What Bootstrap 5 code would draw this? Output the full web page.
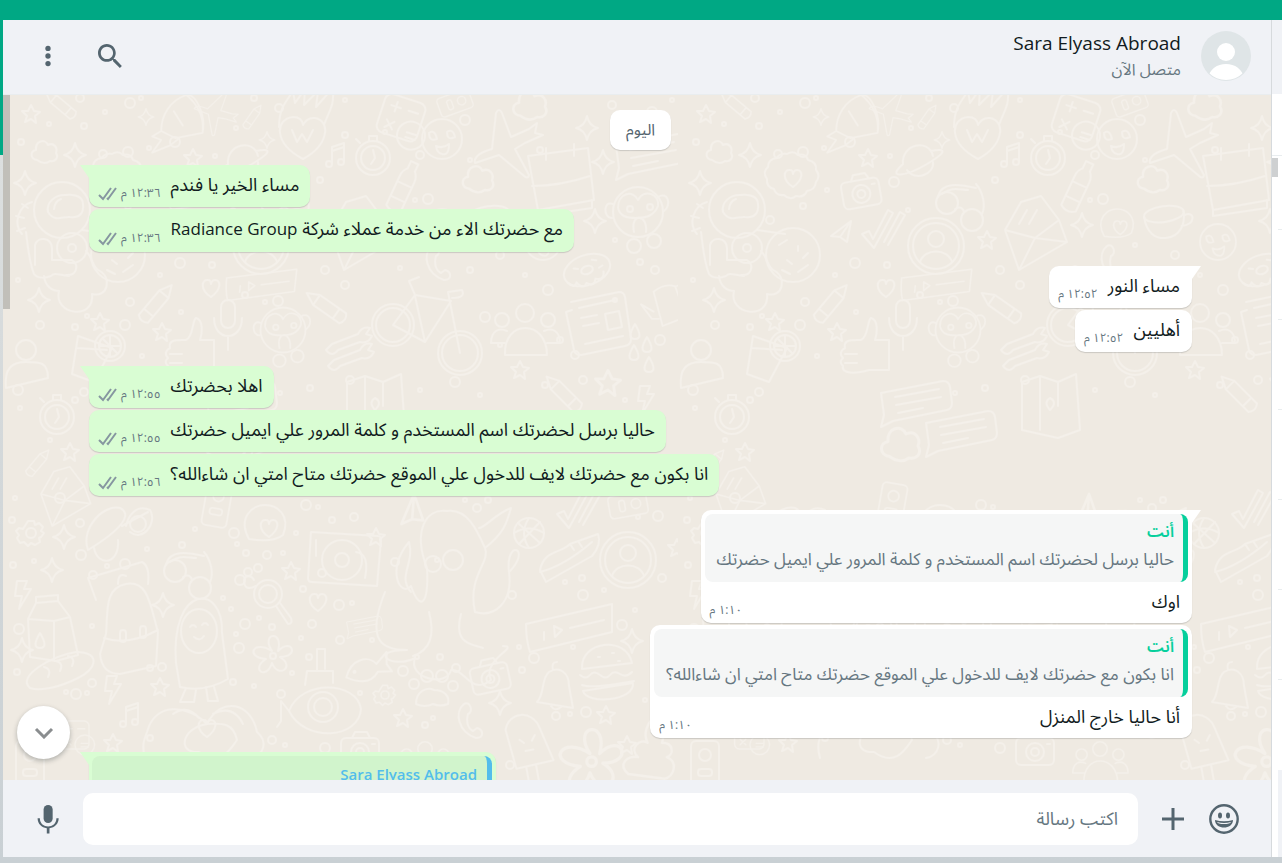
<!DOCTYPE html>
<html lang="ar" dir="rtl">
<head>
<meta charset="utf-8">
<meta name="viewport" content="width=device-width, initial-scale=1">
<title>Sara Elyass Abroad</title>
<link rel="stylesheet" href="https://cdn.jsdelivr.net/npm/bootstrap@5.3.0/dist/css/bootstrap.min.css">
<style>
:root{--icon:#54656f;--muted:#667781;--ink:#111b21;--panel:#f0f2f6;--line:#e9edef}
body{font-family:"Open Sans","Noto Sans Arabic",sans-serif;font-size:18px;line-height:30px;color:var(--ink);
  background:linear-gradient(#00a884 155px,#dcdfdf 155px,#d2d7d9 500px,#c9d0d4 100%);overflow:hidden}
.shell{height:100vh;padding:20px 0 6px 3px}
.side{width:10px;background:#fff}
.side-head{height:74px;background:var(--panel)}
.side-search{height:62px;border-bottom:1px solid var(--line)}
.side-list{position:relative;padding-left:6px}
.side-thumb{position:absolute;top:2px;left:0;width:6px;height:19px;background:#ced0d1}
.side-row{flex:0 0 90px;border-bottom:1px solid var(--line)}
.side-row:first-of-type{flex-basis:74px}
.side-row.active{background:var(--panel);border:0;flex:1 1 0}
.chat{min-width:0;border-right:1px solid #d6dadd}
.chat-head{height:75px;background:var(--panel);padding:0 20px 2px 29px;gap:30px;border-bottom:1px solid var(--line)}
.who{margin-right:-10px}
.who-name{font-size:19px;line-height:26px;font-weight:400;direction:ltr;text-align:right}
.who-state{font-size:16px;line-height:26px;color:var(--muted)}
.tool{border:0;background:none;padding:0;width:32px;height:32px;color:var(--icon);display:flex;align-items:center;justify-content:center;flex-shrink:0}
.stream{position:relative;background:#efeae2;overflow:hidden;min-height:0}
.wall{position:absolute;inset:0;width:100%;height:100%}
.thumb{position:absolute;left:0;top:0;width:7px;height:214px;background:rgba(11,20,26,.2)}
.log{position:relative;padding:15px 79px 0 86px}
.day{font-size:16px;line-height:24px;padding:7px 16px 9px;color:var(--icon);margin-bottom:15px}
.day,.bub{background:#fff;border-radius:10px;box-shadow:0 1px 1px rgba(11,20,26,.16)}
.turn{gap:2px;margin-bottom:14px}
.bub{position:relative}
.out .bub{background:#d9fdd3}
.tail:before{content:"";position:absolute;top:0;width:18px;height:13px;background:inherit}
.in .tail:before{right:-9px;clip-path:polygon(0 0,100% 0,9px 100%,0 100%)}
.out .tail:before{left:-9px;clip-path:polygon(0 0,100% 0,100% 100%,9px 100%)}
.in .tail{border-top-right-radius:0}.out .tail{border-top-left-radius:0}
.says{display:flex;justify-content:space-between;gap:10px;padding:4px 12px 8px 9px}
.out .says{padding-right:11px}
.stamp{font-size:12px;line-height:20px;color:var(--muted);display:flex;gap:4px;align-self:flex-end;margin-bottom:-4px;white-space:nowrap}
.stamp svg{margin-top:4px}
.latin{font-size:17px}
.quoted{position:relative;background:#f5f6f6;border-radius:8px;margin:4px 4px 0;padding:3px 9px 9px 12px;border-right:5px solid #06cf9c;overflow:hidden;font-size:17px;line-height:28px;color:var(--muted)}
.out .quoted{background:#d1f4cc;border-color:#53bdeb;padding:4px 10px 36px 16px;margin-left:3px}
.quoted strong{display:block;font-weight:600;font-size:16px;color:#06cf9c}
.out .quoted strong{color:#53bdeb;font-size:15px}
.in .reply .says{padding:4px 12px 7px 9px}
.later{width:407px}
.jump{position:absolute;left:14px;bottom:21px;width:53px;height:53px;background:#fff;border:0;border-radius:50%;color:#8a8d8f;box-shadow:0 2px 5px rgba(11,20,26,.28);display:flex;align-items:center;justify-content:center}
.compose{height:77px;background:var(--panel);padding:0 31px 0 29px;gap:19px}
.compose .form-control{height:52px;border:0;border-radius:10px;padding:0 20px 2px;font-size:18px;color:var(--ink)}
.compose .form-control::placeholder{color:var(--muted);opacity:1}
</style>
</head>
<body>
<div class="shell d-flex">
  <aside class="side d-flex flex-column flex-shrink-0">
    <div class="side-head flex-shrink-0"></div>
    <div class="side-search flex-shrink-0"></div>
    <div class="side-list flex-fill d-flex flex-column">
      <div class="side-row"></div><div class="side-row"></div><div class="side-row"></div><div class="side-row"></div><div class="side-row"></div><div class="side-row"></div><div class="side-row border-0"></div><div class="side-row active"></div>
      <span class="side-thumb"></span>
    </div>
  </aside>
  <main class="chat flex-fill d-flex flex-column">
    <header class="chat-head d-flex align-items-center flex-shrink-0">
      <svg width="50" height="50" viewBox="0 0 50 50" aria-hidden="true"><defs><clipPath id="av"><circle cx="25" cy="25" r="24"/></clipPath></defs><circle cx="25" cy="25" r="25" fill="#dfe5e7"/><g fill="#fff" clip-path="url(#av)"><circle cx="25" cy="21" r="9"/><path d="M6 50c2-12 10-17 19-17s17 5 19 17z"/></g></svg>
      <div class="who flex-fill">
        <h1 class="who-name m-0">Sara Elyass Abroad</h1>
        <div class="who-state">متصل الآن</div>
      </div>
      <button class="tool" type="button" aria-label="بحث"><svg width="32" height="32" viewBox="0 0 24 24" fill="currentColor"><path d="M15.9 14.3H15l-.3-.3c1-1.1 1.6-2.7 1.6-4.3 0-3.7-3-6.7-6.7-6.7S3 6 3 9.7s3 6.7 6.7 6.7c1.6 0 3.2-.6 4.3-1.6l.3.3v.8l5.1 5.1 1.5-1.5-5-5.2zm-6.2 0c-2.6 0-4.6-2.1-4.6-4.6s2.1-4.6 4.6-4.6 4.6 2.1 4.6 4.6-2 4.6-4.6 4.6z"/></svg></button>
      <button class="tool" type="button" aria-label="القائمة"><svg width="32" height="32" viewBox="0 0 24 24" fill="currentColor"><circle cx="12" cy="6.300" r="2"/><circle cx="12" cy="12" r="2"/><circle cx="12" cy="17.700" r="2"/></svg></button>
    </header>
    <section class="stream flex-fill">
      <svg class="wall" aria-hidden="true">
        <defs>
          <symbol id="star" overflow="visible"><path d="M0-9 3-3 9-2 4 2 5 9 0 5-6 8-4 2-9-3-3-3z"/></symbol>
          <symbol id="spark" overflow="visible"><path d="M0-12Q2-2 11 0 2 2 0 12-2 2-11 0-2-2 0-12z"/></symbol>
          <symbol id="cloud" overflow="visible"><path d="M-9 9c-7-1-7-9-1-10-1-9 9-12 12-5 6-3 10 3 8 8 3 5-1 9-6 8-4 3-9 2-13-1z"/></symbol>
          <symbol id="heart" overflow="visible"><path d="M0 9C-12 1-9-9-3-8q3 0 3 4 1-4 4-4C10-8 11 1 0 9z"/></symbol>
          <symbol id="gear" overflow="visible"><circle r="5"/><path d="M-3-12h6l1 4 4-2 4 4-2 4 3 2-3 4-2 1 1 4-5 3-4-2-3 3-4-4-4 1-3-5 2-3-3-4 3-3 4 1z"/></symbol>
          <symbol id="astro" overflow="visible"><circle r="28"/><path d="M-14 2C-16-8-6-16 4-15c10-1 17 2 17 9 1 9-3 14-13 13-7-1-15 6-22-5zM-8-1q1-8 7-10M-30-8c-14 4-19 22-10 32M-34-2l-6-4M-38 8l-8-2M-37 18l-8 3M-36 22c2 16 3 30 8 42 4 5 12 4 17 2 3-4 8-1 18 0M-27 55V35c3-9 16-8 17 3v12h20c8 6 4 16-6 15M-18 66c1 10 8 15 15 15-6 24 36 30 33 3 16 4 20-16 8-23-7-2-7-13-14-20M20 20l28 4"/><circle cx="10" cy="38" r="15"/><circle cx="10" cy="38" r="4"/><circle cx="56" cy="45" r="27"/><path d="M42 35l8-5M61 36v5M50 50l5 4M66 48l5-5M45 60l8 4M61 62l10-7"/></symbol>
          <symbol id="badge" overflow="visible"><path d="M-6-24q6-4 11 1 8-2 10 5 9 2 8 10 5 6 0 12-1 8-9 9-3 7-11 5-6 5-12-1-8 1-10-6-8-2-7-10-5-7 1-12 0-8 9-9 3-5 10-4z"/><use href="#heart"/></symbol>
          <symbol id="camera" overflow="visible"><rect x="-19" y="-12" width="38" height="27" rx="5"/><circle cy="2" r="9"/><circle cy="2" r="4"/><path d="M-8-12l3-6H7l3 6M12-6h3"/></symbol>
          <symbol id="planet" overflow="visible"><path d="M-14 4C-16-16 12-22 16-4M-10 10C-2 22 18 14 16 2M-14 4C-32 20-10 16 10 4S30-12 14-9"/></symbol>
          <symbol id="rocket" overflow="visible"><path d="M-12 10C-12-8-2-24 16-30 28-20 36-6 34 12L4 18zM-12 10l-10 6 10 4-10 14 20-8 10-8M2-12l10 16M16-30C26-32 38-8 34 12"/></symbol>
          <symbol id="flame" overflow="visible"><path d="M0 26C-30 10-28-14-10-16Q-1-16 0-8 4-16 12-15C28-12 26 12 0 26zM-24-6c0-20 8-26 14-36l2 12 10-14-1 16 14-14-2 16 16-18c4 14-4 24-8 36"/><path d="M-11-3l5 12 5-8 5 8 6-12"/></symbol>
          <symbol id="specs" overflow="visible"><circle cx="-13" cy="-5" r="11"/><circle cx="12" cy="12" r="11"/><path d="M-5 1Q2-3 4 4M-22-12c4-14 20-12 38-8M22 6c4-8 1-22-6-30M-18-14c10-8 18-4 26-4"/></symbol>
          <symbol id="mail" overflow="visible"><path d="M-30 0-14-28 6-34 24-10 32 12-16 40zM-30 0l30 8 24-18M0 8l32 4M0 8l-16 32M-16-6l8-14M-6-6l8-14"/></symbol>
          <symbol id="face" overflow="visible"><circle r="28"/><circle r="23"/><circle cy="-7" r="8"/><path d="M-16 16C-12 2 12 2 16 16"/></symbol>
          <symbol id="ticks" overflow="visible"><path d="M-18 4l7-3 4 8L8-20l5 3L-6 18zM4 12 20-18l5 3L8 15"/></symbol>
          <symbol id="plane" overflow="visible"><path d="M-10 4 10-11 6 10-1 5zM-1 5 10-11"/></symbol>
          <symbol id="note" overflow="visible"><path d="M-6 8V-8l12-4V6M-6-4l12-4"/><circle cx="-9" cy="9" r="3"/><circle cx="3" cy="7" r="3"/></symbol>
          <symbol id="clock" overflow="visible"><circle r="17"/><circle r="12"/><path d="M0-8l2 8-4 6M-4-17v-5h8v5M-13-15l-4-4"/></symbol>
          <symbol id="bottle" overflow="visible"><path d="M-8-12q0-6 4-10v-8h8v8q4 4 4 10v32q-8 6-16 0zM-8-6H8M-8 10H8"/></symbol>
          <symbol id="smile" overflow="visible"><circle r="20"/><path d="M-13-6q6-4 8 6-8 3-8-6zM5-7q6-4 8 5-8 4-8-5zM-6 7q7 3 13-2 0 12-7 10-5-1-6-8z"/></symbol>
          <symbol id="calc" overflow="visible"><rect x="-22" y="-20" width="42" height="40" rx="7"/><path d="M-14-9h10M-9-14v10M4-9h10M-14 6l8 8M-6 6l-8 8"/><circle cx="14" cy="14" r="14"/><path d="M9 12h10M9 17h10"/></symbol>
          <symbol id="jet" overflow="visible"><path d="M-30 18c-2-8 10-12 17-14l4-36q3-6 6 0L6-8 24-16l8-6-2 10 8 2-18 8-10 6 14 26q-1 5-6 0L-6 10z"/></symbol>
          <symbol id="cal" overflow="visible"><path d="M-32-24 28-32 34 20-22 30z"/><path d="M-14-32v12M14-36v12M-28 6q28 0 58-10M-22 30v6l54-8v-8"/></symbol>
          <symbol id="cup" overflow="visible"><ellipse cy="-8" rx="20" ry="8"/><path d="M-20-8c0 16 8 24 20 24S20 6 20-8M20-4c12-4 10 12-4 10"/></symbol>
          <symbol id="donut" overflow="visible"><ellipse rx="24" ry="15"/><ellipse rx="6" ry="4"/><path d="M-22 6q4 8 8 2 4 10 9 4 6 7 10-1 8 5 10-4M-12-6l4 2M8-8l4 2M12 2l4-1"/></symbol>
          <symbol id="phone" overflow="visible"><path d="M-6-16c-10 8-6 28 12 34 8 0 8-8 1-10l-4 3C-3 8-4 0-2-6c6-2 2-14-4-10z"/></symbol>
          <symbol id="chatbox" overflow="visible"><path d="M-34-12 28-24q6 0 7 6l2 16q0 6-5 7L-22 16l-12 6 3-12zM-20-8l44-8M-19 0l45-8M-17 8 8 3"/></symbol>
          <symbol id="monkey" overflow="visible"><circle r="25"/><path d="M-20-4c0-16 16-18 20-8 6-12 22-6 20 6-4 10-12 12-22 12C-12 6-18 4-20-4zM-25-8c-10-4-10 14-1 14M20-15c10-6 14 8 6 14M-4 20c-4-20 14-18 12 0"/><circle cx="-8" cy="-3" r="3"/><circle cx="12" cy="-5" r="3"/><circle cx="-4" cy="34" r="7"/><circle cx="16" cy="29" r="7"/></symbol>
          <symbol id="pencil" overflow="visible"><path d="M-6-14 0-26l6 12v32q-6 5-12 0zM-6-14H6M-6 10H6"/></symbol>
          <symbol id="mic2" overflow="visible"><rect x="-7" y="-20" width="14" height="28" rx="7"/><path d="M-14-2c0 24 28 24 28 0M0 16v14"/></symbol>
          <symbol id="thumb2" overflow="visible"><path d="M-4-10C4-14 2-30 6-32c8 2 6 16 4 22h14v30H4c-14 4-28 4-26-4-4-4-2-6 0-8-4-4-2-8 2-10-2-8 6-8 12-8zM-20 4h12M-20 13h12"/></symbol>
          <symbol id="drink" overflow="visible"><path d="M-20-20 14-8-4 26-26 18zM-21-8l30 2"/><circle cx="12" cy="-10" r="15"/><circle cx="12" cy="-10" r="11"/><path d="M2-10h20M12-20v20M5-17l14 14"/></symbol>
          <symbol id="person" overflow="visible"><circle cy="-18" r="10"/><path d="M-20 20c-2-20 6-26 20-26S22-6 22 10z"/></symbol>
          <symbol id="bike" overflow="visible"><circle cx="-35" cy="5" r="21"/><circle cx="-35" cy="5" r="17"/><circle cx="32" cy="33" r="22"/><circle cx="32" cy="33" r="18"/><path d="M-35 5l22-30 36 6L-3 22zM32 33 20-28l14-2q4 8-10 8M-13-25l-6-14 10-4M-3 22l-10-46"/></symbol>
          <symbol id="people" overflow="visible"><circle cy="-20" r="9"/><circle cx="-23" cy="-13" r="7"/><circle cx="23" cy="-13" r="7"/><path d="M-20 22c-2-36 42-36 42 0zM-20 10h-14c0-12 8-16 16-12M22 10h13c0-12-8-16-16-12"/></symbol>
          <symbol id="wrench" overflow="visible"><path d="M-22 8l6-6 26-10q4-8 12-6l-4 6 6 2q-4 8-12 6L-10 8q-6 8-12 0z"/></symbol>
          <symbol id="paper" overflow="visible"><path d="M-26-20 22-30q5 0 6 5l6 42q0 6-6 7l-44 9q-6 0-7-5l-8-38 6-2M-18-14l36-8M-16-4l16-3M-14 4l16-3M-12 22l38-8M8-8l14-3 3 16-14 3z"/></symbol>
          <symbol id="kettle" overflow="visible"><path d="M-16-18q12-10 24-6l12 34-26 10zM-16 4-30-4l12 16 8 0M8-24c16-6 18 10 10 22"/></symbol>
          <symbol id="drop" overflow="visible"><path d="M0-8q9 15 0 15-9 0 0-15z"/></symbol>
          <symbol id="bolt" overflow="visible"><path d="M-5-14h10l-3 8h7L-3 14 0 1h-7z"/></symbol>
          <symbol id="map" overflow="visible"><path d="M-28-18-10-24 8-18 26-26 30 30 8 38-28 30zM-10-24V30M8-18v24"/><path d="M0 10q-7-8 0-12 8 4 0 12z"/></symbol>
          <symbol id="ufo" overflow="visible"><path d="M-22 22C-30 0-6-24 10-20 22-14 14 0-22 22zM-16 20c4 20 26 16 24-8M12-2l26-14M20 4c12 10 28-8 20-22-14-6-22 6-24 16"/><circle cx="28" cy="-4" r="8"/></symbol>
          <symbol id="cell" overflow="visible"><rect x="-14" y="-24" width="28" height="48" rx="5"/><circle cy="-10" r="6"/><rect x="-7" y="4" width="14" height="7" rx="3"/></symbol>
          <symbol id="stick" overflow="visible"><path d="M-16 14C-28-8-12-20 0-20s26 10 18 30Q8 18-16 14z"/><use href="#heart" x="4" y="3"/></symbol>
          <symbol id="deck" overflow="visible"><path d="M-31-28 36-24q3 0 3 4l-4 46-65-4q-4 0-4-4z"/><circle cy="0" r="20"/><circle r="7"/><path d="M14-8q14 2 9 26M-26-20v16"/></symbol>
          <symbol id="octo" overflow="visible"><path d="M-28 0C-42-36-30-60-8-57 12-60 22-38 30-20 36-6 12 8 20 44 40 50 58 34 54 4M-28 0C-26 40-36 42-44 18-54 30-70 2-46-26-40-4-58 8-44 24M-70 24c-20 50-2 58 22 58M-48 82c-40 0-16 20 8 8-8 20 32 30 36 12 14-2 20 26 40 10-10-20 30-34 12-34M30-20c20-16 22-26 26-40-16 6-26 20-32 20M54 4C50-30 78-20 54 4M-26 44c8 30-4 40-16 44M6 46c-8 30 10 30 22 34"/><circle cx="-2" cy="-8" r="10"/><circle cx="-22" cy="-4" r="8"/></symbol>
          <symbol id="ball" overflow="visible"><circle r="15"/><path d="M-11-10 11 10M11-11-10 11M0-15q-10 15 0 30M-15 0q15-9 30 0"/></symbol>
          <symbol id="shoe" overflow="visible"><path d="M-30 14C-26-6-10-2 0-12L28-22q4 10-6 22L-24 26zM-30 16q24-6 52-30M0-12l4 6M8-15l4 6"/></symbol>
          <symbol id="bag" overflow="visible"><path d="M-24 10c2-22-2-46 20-50 22-4 24 20 32 48l-2 34-36 8q-18 0-20-20zM-26 14q24 8 54-8M-34-24-42-46 12-62q8 4 6 22M-12-40q0-12 8-8"/><rect x="-10" y="6" width="6" height="12" rx="3"/><rect x="10" y="2" width="6" height="12" rx="3"/></symbol>
          <symbol id="milk" overflow="visible"><path d="M-24-8l8-16 22-2 12 16 8 38-22 6-26-4zM-24-8l26 2 16-4M2-6v40M-16-24v-6l22-2v6"/><use href="#drop" x="-12" y="14"/></symbol>
          <symbol id="glass" overflow="visible"><circle r="14"/><circle r="9"/><path d="M8 12l12 18q5 0 3-6L12 9M-12-8q-12 6-12-6c2-6 8-4 10 0"/><circle cx="-20" cy="-22" r="4"/><circle cx="-10" cy="-26" r="4"/></symbol>
          <symbol id="penguin" overflow="visible"><path d="M-26 20C-32-60 22-60 20-10L26 36q-24 14-48 8zM-16 45l-6 14h14l2-12M4 44l2 14h10l-4-14"/><ellipse cy="-12" rx="18" ry="22" cx="-3"/><path d="M-12-16q3-4 6 0M0-18q3-4 6 0M-8-6q6 5 10-1"/></symbol>
          <symbol id="flower" overflow="visible"><path d="M0-4c-12-18 12-22 6 0 14-14 22 6 2 6 16 10-2 22-8 6C-6 26-22 14-6 4-28 2-18-16 0-4z"/><circle cx="1" cy="1" r="3"/></symbol>
          <symbol id="fish" overflow="visible"><path d="M-20 6C-12-12 6-12 12-2l12-10-2 12 4 8-14-2C4 16-8 14-20 6z"/><circle cx="-11" cy="2" r="1"/></symbol>
          <symbol id="voice" overflow="visible"><path d="M-44-8 42-28v28l-82 20q-4-12-4-28zM-26 0v8M-16-6l8 4-7 7zM0-4l34-8"/></symbol>
          <symbol id="burger" overflow="visible"><path d="M-26-6c-2-28 44-34 50-6zM-28 0q6 5 10 0t10 0 10 0 10-1 12-2M-26 10q10 4 52-4M-25 16c4 14 52 10 50-8z"/><path d="M-10-18h2M4-22h2M10-14h2"/></symbol>
          <symbol id="bell" overflow="visible"><path d="M-18 14c8-8 4-24 12-30 10-6 20 0 20 14l4 22zM-2-18q-2-8 4-8M-4 18q4 6 10 1"/></symbol>
          <symbol id="paw" overflow="visible"><path d="M-16 14c0-12 10-18 18-14 10 0 16 6 14 14q-8 3-15 0-8 4-17 0z"/><circle cx="-18" cy="-6" r="5"/><circle cx="-5" cy="-14" r="6"/><circle cx="10" cy="-14" r="6"/><circle cx="21" cy="-4" r="5"/></symbol>
          <symbol id="bread" overflow="visible"><path d="M-30 20C-44 8-8-12 16-16c26 0 20 18 2 26-16 8-36 14-48 10zM-16-1q8 2 4 10M-4-7q8 2 4 10M8-12q8 2 4 10"/></symbol>
          <symbol id="hands" overflow="visible"><path d="M-62 30c-4-14 0-20 2-26 8-30 40-28 60-8C14-32 44-26 50 4c12 10 6 24-6 26M0-4C-26 0-30 26-8 24 14 40 24 20 30 12 26-8 10-4 0-4zM-34-14q14-10 26 4M6-14q20-10 30 10"/><use href="#heart"/></symbol>
          <symbol id="sub" overflow="visible"><path d="M-34 4C-22-28 34-26 38 2 36 32-18 36-34 4zM-34 4l-8-10v20l-4 6M-18-22l2-14h26v12M-6-36v-22h8v20"/><circle r="15"/><circle r="9"/></symbol>
          <symbol id="ice" overflow="visible"><path d="M-18 24-22-16c6-18 30-16 34 4l8 34zM-8 24v18h10V24M-10-4l4 4M6-6l-4 5M-6 8h8"/></symbol>
          <symbol id="cone" overflow="visible"><path d="M-18 20c-10-8 0-16 8-14-8-8 2-16 8-12-4-8 0-16 4-20 0 10 12 8 8 20 10 0 10 10 4 12 10 4 6 16-2 18z"/></symbol>
          <pattern id="doodles" width="675" height="700" patternUnits="userSpaceOnUse"><g id="tile" transform="translate(-3 -95)" fill="none" stroke="#f4f0ea" stroke-width="2" stroke-linejoin="round" stroke-linecap="round"></g></pattern>
        </defs>
        <rect width="100%" height="100%" fill="url(#doodles)"/>
      </svg>
      <div class="log d-flex flex-column">
        <div class="day align-self-center">اليوم</div>
        <div class="turn out d-flex flex-column align-items-end">
          <div class="bub tail"><div class="says"><span>مساء الخير يا فندم</span><span class="stamp"><time>١٢:٣٦ م</time><svg width="19" height="14" viewBox="0 0 19 14" fill="none" stroke="#8696a0" stroke-width="2"><path d="M1 8l4 4L13 1M9 11l1 1 8-11"/></svg></span></div></div>
          <div class="bub"><div class="says"><span>مع حضرتك الاء من خدمة عملاء شركة <span class="latin">Radiance Group</span></span><span class="stamp"><time>١٢:٣٦ م</time><svg width="19" height="14" viewBox="0 0 19 14" fill="none" stroke="#8696a0" stroke-width="2"><path d="M1 8l4 4L13 1M9 11l1 1 8-11"/></svg></span></div></div>
        </div>
        <div class="turn in d-flex flex-column align-items-start">
          <div class="bub tail"><div class="says"><span>مساء النور</span><span class="stamp"><time>١٢:٥٢ م</time></span></div></div>
          <div class="bub"><div class="says"><span>أهليين</span><span class="stamp"><time>١٢:٥٢ م</time></span></div></div>
        </div>
        <div class="turn out d-flex flex-column align-items-end">
          <div class="bub tail"><div class="says"><span>اهلا بحضرتك</span><span class="stamp"><time>١٢:٥٥ م</time><svg width="19" height="14" viewBox="0 0 19 14" fill="none" stroke="#8696a0" stroke-width="2"><path d="M1 8l4 4L13 1M9 11l1 1 8-11"/></svg></span></div></div>
          <div class="bub"><div class="says"><span>حاليا برسل لحضرتك اسم المستخدم و كلمة المرور علي ايميل حضرتك</span><span class="stamp"><time>١٢:٥٥ م</time><svg width="19" height="14" viewBox="0 0 19 14" fill="none" stroke="#8696a0" stroke-width="2"><path d="M1 8l4 4L13 1M9 11l1 1 8-11"/></svg></span></div></div>
          <div class="bub"><div class="says"><span>انا بكون مع حضرتك لايف للدخول علي الموقع حضرتك متاح امتي ان شاءالله؟</span><span class="stamp"><time>١٢:٥٦ م</time><svg width="19" height="14" viewBox="0 0 19 14" fill="none" stroke="#8696a0" stroke-width="2"><path d="M1 8l4 4L13 1M9 11l1 1 8-11"/></svg></span></div></div>
        </div>
        <div class="turn in d-flex flex-column align-items-start">
          <div class="bub tail reply"><div class="quoted"><strong>أنت</strong>حاليا برسل لحضرتك اسم المستخدم و كلمة المرور علي ايميل حضرتك</div><div class="says"><span>اوك</span><span class="stamp"><time>١:١٠ م</time></span></div></div>
          <div class="bub reply"><div class="quoted"><strong>أنت</strong>انا بكون مع حضرتك لايف للدخول علي الموقع حضرتك متاح امتي ان شاءالله؟</div><div class="says"><span>أنا حاليا خارج المنزل</span><span class="stamp"><time>١:١٠ م</time></span></div></div>
        </div>
        <div class="turn out d-flex flex-column align-items-end">
          <div class="bub tail reply later"><div class="quoted"><strong>Sara Elyass Abroad</strong></div></div>
        </div>
      </div>
      <span class="thumb"></span>
      <button class="jump" type="button" aria-label="إلى الأسفل"><svg width="20" height="12" viewBox="0 0 20 12" fill="none" stroke="currentColor" stroke-width="3"><path d="M2 2l8 8 8-8"/></svg></button>
    </section>
    <footer class="compose d-flex align-items-center flex-shrink-0">
      <button class="tool" type="button" aria-label="الرموز التعبيرية"><svg class="flex-shrink-0" width="32" height="32" viewBox="0 0 32 32"><circle cx="16" cy="16" r="13.700" fill="none" stroke="currentColor" stroke-width="2.400"/><g fill="currentColor"><ellipse cx="12" cy="12.500" rx="2" ry="3"/><ellipse cx="20" cy="12.500" rx="2" ry="3"/><path d="M7 17q9 2.500 18 0c0 10-18 10-18 0z"/></g><path d="M9 19q7 2 14 0-1 2-7 2t-7-2z" fill="#f0f2f6"/></svg></button>
      <button class="tool" type="button" aria-label="إرفاق"><svg width="22" height="22" viewBox="0 0 22 22" stroke="currentColor" stroke-width="3"><path d="M11 0v22M0 11h22"/></svg></button>
      <input class="form-control flex-fill" type="text" placeholder="اكتب رسالة" aria-label="اكتب رسالة">
      <button class="tool" type="button" aria-label="رسالة صوتية"><svg width="32" height="32" viewBox="0 0 24 24" fill="currentColor"><rect x="8.700" y="1.500" width="6.800" height="13.500" rx="3.400"/><path d="M4.200 11.500h1.700c0 8.200 12.400 8.200 12.400 0H20c0 4.200-3 7-6.900 7.500v3.800h-2V19c-3.900-.5-6.900-3.300-6.900-7.500z"/></svg></button>
    </footer>
  </main>
</div>
<script>
// Wallpaper doodles: [symbol, x, y, rotation, scale]
const doodles=[['star',31,114],['pencil',62,106,-50,.8],['cloud',46,151],['spark',75,155],['spark',146,117,0,.7],['rocket',172,122,0,.9],['jet',215,112,40,.6],['pencil',252,118,35,.6],['flame',303,133],['spark',267,140,0,.7],['star',193,158],['planet',242,160],['badge',118,178],['camera',186,192,-10],['specs',285,208],['mail',360,230],['face',261,246],['ticks',205,230],['plane',166,232],['star',312,240],['note',338,155],['clock',373,158],['bottle',402,190,25],['smile',442,139],['calc',402,118,18],['cell',455,103,70,.7],['jet',505,145],['cloud',532,104,0,1.3],['spark',587,128],['cal',560,180],['cloud',480,178,0,1.2],['cup',490,222,-8],['stick',442,225,0,.8],['spark',407,225],['smile',543,242,0,.9],['donut',587,270,-20],['phone',438,262],['chatbox',650,158],['monkey',638,212],['spark',595,221],['spark',603,162],['spark',25,183],['astro',62,210],['heart',211,288],['paper',597,322],['kettle',668,308,0,.9],['drop',635,332],['drop',647,345],['drop',634,353],['drop',649,365],['bike',428,320],['people',525,333],['wrench',348,342],['wrench',350,358],['pencil',155,305,40],['mic2',228,320],['monkey',283,330,0,.9],['pencil',328,308,-55],['thumb2',190,350],['drink',98,356],['person',26,368],['clock',57,417],['spark',39,300],['star',100,322],['star',162,332],['star',608,383,0,1.4],['pencil',565,395,-45],['map',375,400],['star',520,370],['voice',261,288,6,.8],['bolt',645,400],['chatbox',240,405],['chatbox',285,435],['cloud',228,443,0,1.5],['mail',65,494,0,.8],['star',70,452],['pencil',37,464,40,.7],['gear',31,533],['spark',64,537],['ufo',110,528],['cell',217,505,10,.9],['stick',265,525],['deck',342,560],['octo',455,568],['plane',410,513,-30,1.3],['ball',529,533],['shoe',570,556],['ticks',575,510],['cell',628,505,80,.8],['face',628,560],['star',677,548],['bag',130,624],['milk',52,627],['specs',188,576],['glass',268,594],['penguin',202,643],['flower',272,655],['fish',365,668,-10],['chatbox',364,628,0,.5],['voice',570,632],['burger',608,675],['bell',555,688],['camera',490,677,-12],['paw',432,690],['bread',60,668],['bolt',112,690],['star',160,687],['hands',207,728],['sub',323,707],['gear',385,695,0,.8],['star',403,718],['ice',530,742,-10],['phone',470,720],['spark',163,605],['spark',22,650],['star',113,743],['spark',632,641],['spark',500,703],['star',606,715],['cone',650,750,0,1.2],['heart',318,602],['star',291,571],['star',376,537],['bolt',22,595],['calc',75,735,0,.7],['note',132,715],['cell',30,765],['camera',360,750],['people',425,765,0,.8],['flower',590,760,0,1.6],['star',627,745],['spark',52,570]];
const rings=[[49,124],[84,126],[80,98],[105,112],[130,103],[141,98],[21,142],[103,154],[149,148],[128,152],[215,156],[254,98],[279,108],[236,128],[175,142],[345,100],[345,135],[420,155],[385,132],[465,120],[470,160],[540,150],[612,105],[625,125],[652,112],[672,100],[128,206],[95,220],[152,190],[219,182],[233,210],[320,180],[325,270],[415,200],[428,199],[460,245],[470,270],[500,255],[525,275],[548,290],[615,240],[640,262],[655,270],[18,280],[180,263],[160,275],[212,265],[130,302],[181,312],[125,325],[87,316],[75,327],[40,325],[265,302],[278,301],[142,356],[245,295],[345,285],[400,268],[485,317],[500,345],[560,340],[575,355],[615,300],[660,340],[280,393],[310,388],[350,380],[420,390],[455,382],[480,395],[545,385],[583,380],[625,400],[18,390],[20,408],[75,400],[84,392],[50,440],[60,498],[15,498],[12,520],[80,523],[195,529],[234,533],[237,544],[246,553],[267,555],[283,553],[306,505],[318,507],[332,520],[354,517],[296,533],[81,555],[34,561],[13,565],[93,575],[107,566],[125,564],[147,549],[182,545],[395,562],[437,560],[240,580],[223,598],[303,589],[322,573],[231,609],[245,624],[259,618],[272,627],[312,624],[352,603],[339,605],[301,638],[309,657],[340,640],[236,634],[239,648],[254,686],[233,682],[281,694],[292,673],[19,629],[92,626],[17,672],[92,683],[66,692],[76,694],[87,693],[150,668],[162,667],[360,693],[403,671],[417,657],[440,657],[456,668],[519,647],[534,658],[573,647],[522,670],[556,716],[570,714],[586,712],[645,700],[658,690],[512,595],[565,582],[583,595],[604,590],[582,578],[662,578],[638,517],[658,516],[465,500],[488,500],[477,508],[372,640],[622,625],[635,610],[150,738],[272,740],[285,745],[325,748],[433,718],[425,725],[510,765]];
const tile=document.getElementById('tile');
tile.innerHTML=doodles.map(([id,x,y,r=0,s=1])=>`<use href="#${id}" transform="translate(${x} ${y}) rotate(${r}) scale(${s})"/>`).join('')
 +rings.map(([x,y],i)=>`<circle cx="${x}" cy="${y}" r="${[2,3,4,2,5][i%5]}"/>`).join('');
</script>
<script src="https://cdn.jsdelivr.net/npm/bootstrap@5.3.0/dist/js/bootstrap.bundle.min.js"></script>
</body>
</html>
